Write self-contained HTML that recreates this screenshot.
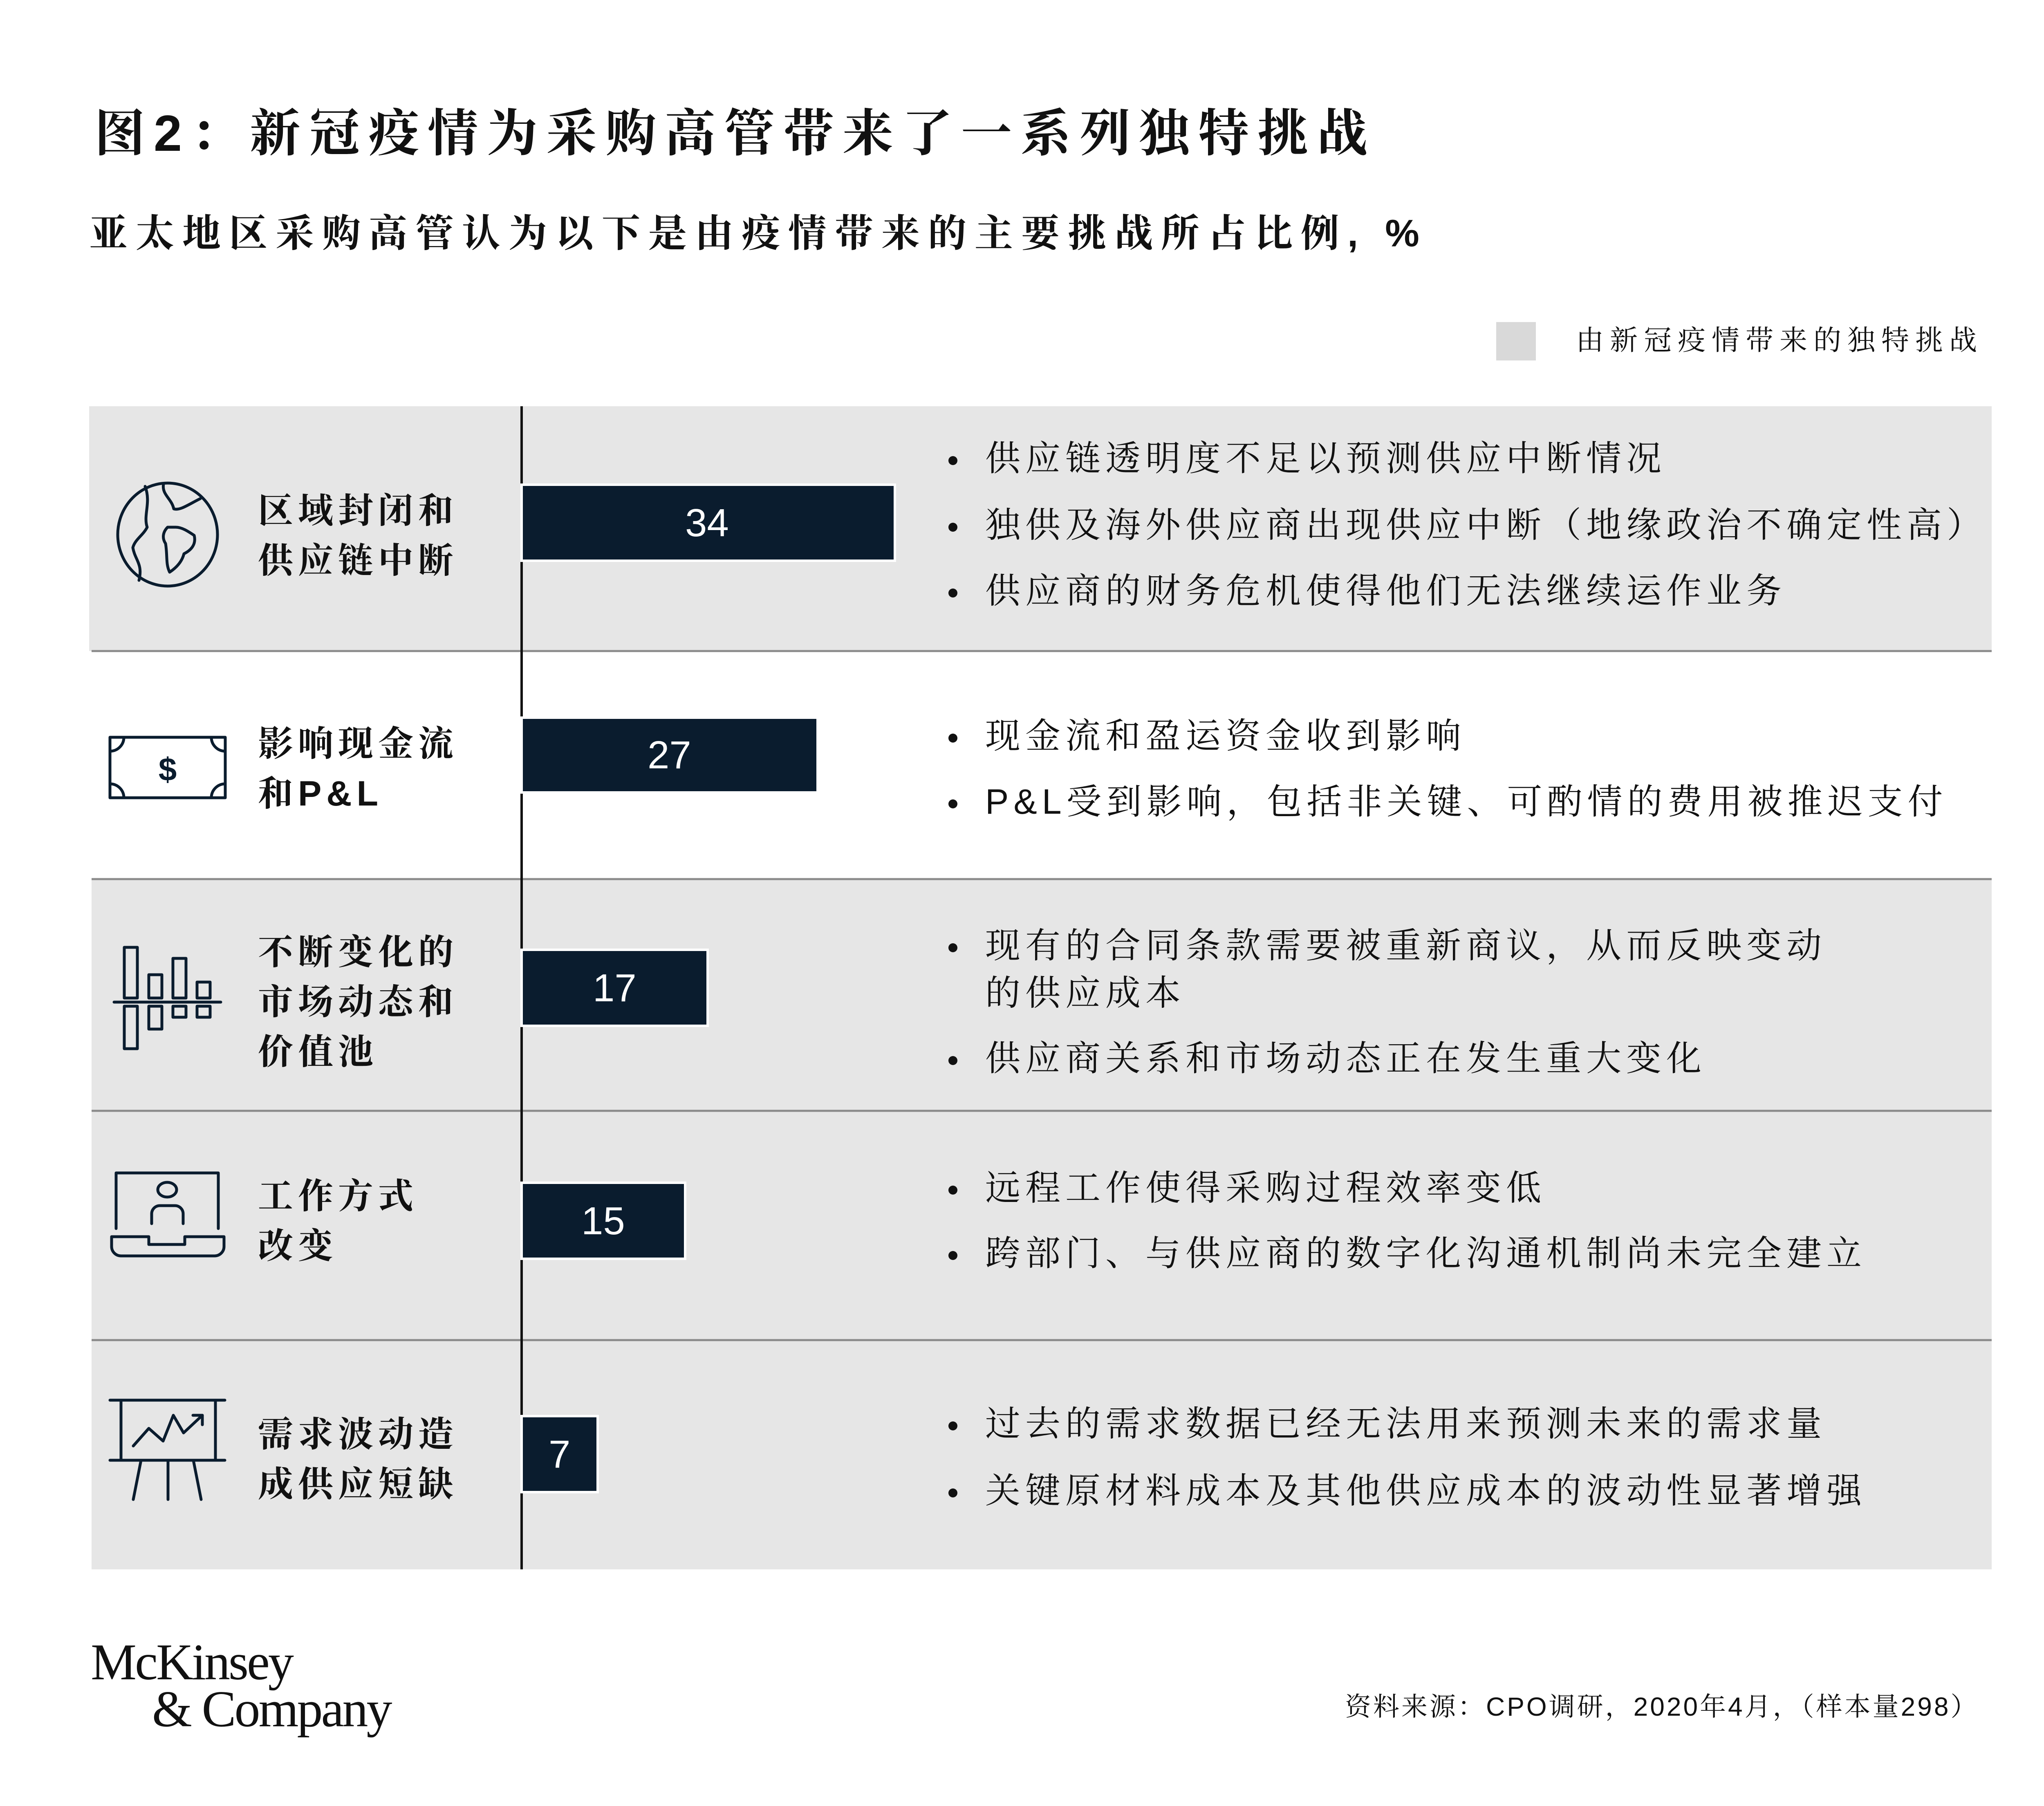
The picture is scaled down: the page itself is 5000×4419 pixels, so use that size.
<!DOCTYPE html>
<html><head><meta charset="utf-8">
<style>
html,body{margin:0;padding:0;background:#fff;}
body{width:5000px;height:4419px;position:relative;overflow:hidden;}
.t{position:absolute;white-space:nowrap;color:#111;line-height:1;font-family:"Liberation Sans","Noto Serif CJK SC",serif;}
.lab{font-size:86px;letter-spacing:12px;font-weight:700;}
.bl{font-size:86px;letter-spacing:12px;font-weight:400;}
.dot{position:absolute;width:22px;height:22px;border-radius:50%;background:#111;}
.num{position:absolute;color:#fff;font-family:"Liberation Sans",sans-serif;font-size:96px;line-height:1;}
</style></head><body>
<svg width="5000" height="4419" style="position:absolute;left:0;top:0">
<g fill="#e6e6e6">
<rect x="218" y="994" width="4654" height="599"/>
<rect x="224" y="2151" width="4648" height="567"/>
<rect x="224" y="2718" width="4648" height="561"/>
<rect x="224" y="3279" width="4648" height="561"/>
</g>
<g stroke="#8a8a8a" stroke-width="5">
<line x1="224" y1="1593" x2="4872" y2="1593"/>
<line x1="224" y1="2151" x2="4872" y2="2151"/>
<line x1="224" y1="2718" x2="4872" y2="2718"/>
<line x1="224" y1="3279" x2="4872" y2="3279"/>
</g>
<rect x="3660" y="788" width="97" height="94" fill="#d9d9d9"/>
<line x1="1276" y1="994" x2="1276" y2="3840" stroke="#111" stroke-width="6"/>
<g fill="#0a1c2e" stroke="#fff" stroke-width="6">
<rect x="1276" y="1186" width="913" height="186"/>
<rect x="1276" y="1756" width="724" height="183"/>
<rect x="1276" y="2324" width="455" height="186"/>
<rect x="1276" y="2894" width="400" height="186"/>
<rect x="1276" y="3465" width="186" height="186"/>
</g>
<g fill="none" stroke="#0a1c2e" stroke-width="7" stroke-linejoin="round" stroke-linecap="round">
<ellipse cx="410" cy="1308" rx="122" ry="126"/>
<path d="M355 1190 C370 1230 350 1260 360 1290 C350 1310 330 1320 325 1340 C330 1370 350 1380 340 1420"/>
<path d="M400 1184 C395 1210 420 1220 425 1245 C440 1250 460 1235 490 1220"/>
<path d="M410 1290 C400 1300 395 1315 405 1330 C410 1360 405 1380 415 1400 C430 1390 445 1375 450 1355 C470 1345 480 1330 475 1310 C460 1300 445 1290 430 1290 Z"/>
<rect x="269" y="1804" width="282" height="148"/>
<path d="M269 1838 A34 34 0 0 0 303 1804 M517 1804 A34 34 0 0 0 551 1838 M269 1918 A34 34 0 0 1 303 1952 M517 1952 A34 34 0 0 1 551 1918"/>
<line x1="279" y1="2452" x2="540" y2="2452"/>
<rect x="304" y="2318" width="32" height="124"/>
<rect x="364" y="2385" width="32" height="57"/>
<rect x="423" y="2345" width="32" height="97"/>
<rect x="482" y="2403" width="32" height="39"/>
<rect x="304" y="2462" width="32" height="104"/>
<rect x="364" y="2462" width="32" height="56"/>
<rect x="423" y="2462" width="32" height="27"/>
<rect x="482" y="2462" width="32" height="27"/>
<path d="M284 3006 V2870 H534 V3006"/>
<path d="M273 3026 H364 V3045 H452 V3026 H548 V3050 A23 23 0 0 1 525 3073 H296 A23 23 0 0 1 273 3050 Z"/>
<ellipse cx="409" cy="2911" rx="23" ry="18"/>
<path d="M371 2994 V2970 A20 20 0 0 1 391 2950 H428 A20 20 0 0 1 448 2970 V2994"/>
<line x1="269" y1="3426" x2="550" y2="3426"/>
<line x1="269" y1="3573" x2="550" y2="3573"/>
<line x1="296" y1="3426" x2="296" y2="3573"/>
<line x1="527" y1="3426" x2="527" y2="3573"/>
<line x1="345" y1="3573" x2="326" y2="3669"/>
<line x1="411" y1="3573" x2="411" y2="3669"/>
<line x1="473" y1="3573" x2="492" y2="3669"/>
<polyline points="326,3538 364,3495 399,3526 424,3463 449,3506 495,3463"/>
<polyline points="472,3463 495,3463 495,3486"/>
</g>
<text x="410" y="1910" font-family="Liberation Sans" font-weight="700" font-size="80" text-anchor="middle" fill="#0a1c2e">$</text>
</svg>

<div class="t" style="left:231px;top:265px;font-size:124px;font-weight:700;letter-spacing:21px;">图2：新冠疫情为采购高管带来了一系列独特挑战</div>
<div class="t" style="left:218px;top:524px;font-size:94px;font-weight:700;letter-spacing:20px;">亚太地区采购高管认为以下是由疫情带来的主要挑战所占比例, %</div>
<div class="t" style="left:3855px;top:799px;font-size:68px;letter-spacing:15px;">由新冠疫情带来的独特挑战</div>

<div class="num" style="left:1676px;top:1232px;">34</div>
<div class="num" style="left:1584px;top:1800px;">27</div>
<div class="num" style="left:1450px;top:2370px;">17</div>
<div class="num" style="left:1422px;top:2940px;">15</div>
<div class="num" style="left:1342px;top:3511px;">7</div>

<div class="t lab" style="left:631px;top:1207px;">区域封闭和</div>
<div class="t lab" style="left:631px;top:1329px;">供应链中断</div>
<div class="t lab" style="left:631px;top:1777px;">影响现金流</div>
<div class="t lab" style="left:631px;top:1899px;">和P&amp;L</div>
<div class="t lab" style="left:631px;top:2287px;">不断变化的</div>
<div class="t lab" style="left:631px;top:2409px;">市场动态和</div>
<div class="t lab" style="left:631px;top:2531px;">价值池</div>
<div class="t lab" style="left:631px;top:2884px;">工作方式</div>
<div class="t lab" style="left:631px;top:3006px;">改变</div>
<div class="t lab" style="left:631px;top:3467px;">需求波动造</div>
<div class="t lab" style="left:631px;top:3589px;">成供应短缺</div>

<div class="dot" style="left:2320px;top:1116px"></div><div class="t bl" style="left:2410px;top:1079px;">供应链透明度不足以预测供应中断情况</div>
<div class="dot" style="left:2320px;top:1279px"></div><div class="t bl" style="left:2410px;top:1242px;">独供及海外供应商出现供应中断（地缘政治不确定性高）</div>
<div class="dot" style="left:2320px;top:1440px"></div><div class="t bl" style="left:2410px;top:1403px;">供应商的财务危机使得他们无法继续运作业务</div>
<div class="dot" style="left:2320px;top:1795px"></div><div class="t bl" style="left:2410px;top:1758px;">现金流和盈运资金收到影响</div>
<div class="dot" style="left:2320px;top:1956px"></div><div class="t bl" style="left:2410px;top:1919px;">P&amp;L受到影响，包括非关键、可酌情的费用被推迟支付</div>
<div class="dot" style="left:2320px;top:2308px"></div><div class="t bl" style="left:2410px;top:2271px;">现有的合同条款需要被重新商议，从而反映变动</div>
<div class="t bl" style="left:2410px;top:2387px;">的供应成本</div>
<div class="dot" style="left:2320px;top:2584px"></div><div class="t bl" style="left:2410px;top:2547px;">供应商关系和市场动态正在发生重大变化</div>
<div class="dot" style="left:2320px;top:2901px"></div><div class="t bl" style="left:2410px;top:2864px;">远程工作使得采购过程效率变低</div>
<div class="dot" style="left:2320px;top:3061px"></div><div class="t bl" style="left:2410px;top:3024px;">跨部门、与供应商的数字化沟通机制尚未完全建立</div>
<div class="dot" style="left:2320px;top:3478px"></div><div class="t bl" style="left:2410px;top:3441px;">过去的需求数据已经无法用来预测未来的需求量</div>
<div class="dot" style="left:2320px;top:3642px"></div><div class="t bl" style="left:2410px;top:3605px;">关键原材料成本及其他供应成本的波动性显著增强</div>

<div class="t" style="left:222px;top:4005px;font-family:'Liberation Serif',serif;font-size:126px;letter-spacing:-4px;">McKinsey</div>
<div class="t" style="left:372px;top:4120px;font-family:'Liberation Serif',serif;font-size:126px;letter-spacing:-4px;">&amp; Company</div>
<div class="t" style="left:3290px;top:4144px;font-size:64px;letter-spacing:5px;">资料来源：CPO调研，2020年4月，（样本量298）</div>
</body></html>
